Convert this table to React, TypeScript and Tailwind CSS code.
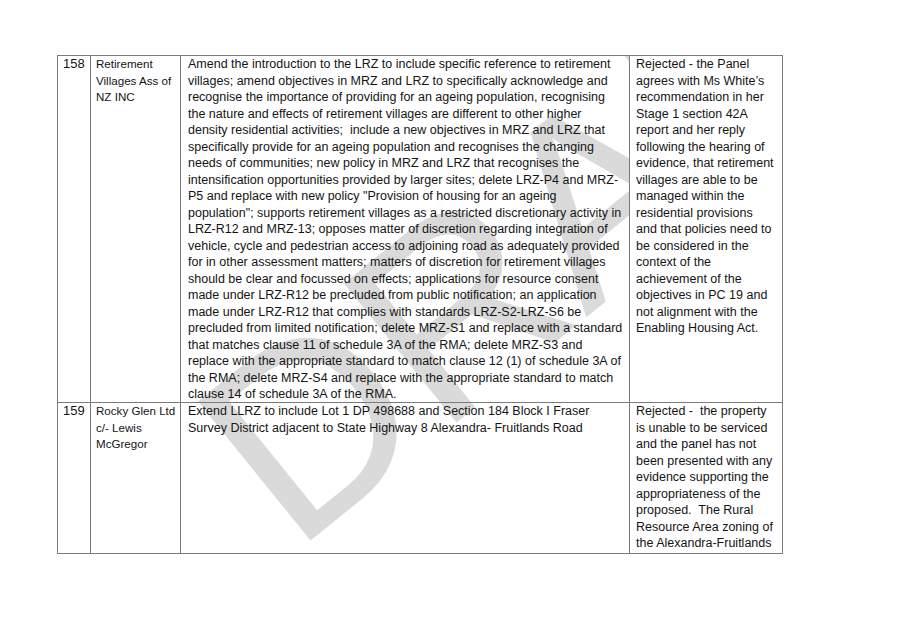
import React from 'react';

const FONT = { fontFamily: '"Liberation Sans", Arial, sans-serif' };

const rows = [
  {
    num: '158',
    submitter: ['Retirement', 'Villages Ass of', 'NZ INC'],
    summary: [
      'Amend the introduction to the LRZ to include specific reference to retirement',
      'villages; amend objectives in MRZ and LRZ to specifically acknowledge and',
      'recognise the importance of providing for an ageing population, recognising',
      'the nature and effects of retirement villages are different to other higher',
      'density residential activities;  include a new objectives in MRZ and LRZ that',
      'specifically provide for an ageing population and recognises the changing',
      'needs of communities; new policy in MRZ and LRZ that recognises the',
      'intensification opportunities provided by larger sites; delete LRZ-P4 and MRZ-',
      'P5 and replace with new policy "Provision of housing for an ageing',
      'population"; supports retirement villages as a restricted discretionary activity in',
      'LRZ-R12 and MRZ-13; opposes matter of discretion regarding integration of',
      'vehicle, cycle and pedestrian access to adjoining road as adequately provided',
      'for in other assessment matters; matters of discretion for retirement villages',
      'should be clear and focussed on effects; applications for resource consent',
      'made under LRZ-R12 be precluded from public notification; an application',
      'made under LRZ-R12 that complies with standards LRZ-S2-LRZ-S6 be',
      'precluded from limited notification; delete MRZ-S1 and replace with a standard',
      'that matches clause 11 of schedule 3A of the RMA; delete MRZ-S3 and',
      'replace with the appropriate standard to match clause 12 (1) of schedule 3A of',
      'the RMA; delete MRZ-S4 and replace with the appropriate standard to match',
      'clause 14 of schedule 3A of the RMA.',
    ],
    decision: [
      'Rejected - the Panel',
      'agrees with Ms White\u2019s',
      'recommendation in her',
      'Stage 1 section 42A',
      'report and her reply',
      'following the hearing of',
      'evidence, that retirement',
      'villages are able to be',
      'managed within the',
      'residential provisions',
      'and that policies need to',
      'be considered in the',
      'context of the',
      'achievement of the',
      'objectives in PC 19 and',
      'not alignment with the',
      'Enabling Housing Act.',
    ],
    height: 'h-[347px]',
  },
  {
    num: '159',
    submitter: ['Rocky Glen Ltd', 'c/- Lewis', 'McGregor'],
    summary: [
      'Extend LLRZ to include Lot 1 DP 498688 and Section 184 Block I Fraser',
      'Survey District adjacent to State Highway 8 Alexandra- Fruitlands Road',
    ],
    decision: [
      'Rejected -  the property',
      'is unable to be serviced',
      'and the panel has not',
      'been presented with any',
      'evidence supporting the',
      'appropriateness of the',
      'proposed.  The Rural',
      'Resource Area zoning of',
      'the Alexandra-Fruitlands',
    ],
    height: 'h-[150px]',
  },
];

const Lines: React.FC<{ lines: string[]; className?: string }> = ({ lines, className }) => (
  <div className={className}>
    {lines.map((l, i) => (
      <div key={i} className="whitespace-pre">
        {l}
      </div>
    ))}
  </div>
);

export default function App() {
  return (
    <div className="w-[907px] h-[626px] bg-white text-[#141414]" style={FONT}>
      <div className="pt-[55px] pl-[57px]">
        <div className="relative w-[726px] border border-[#7a7a7a]">
          {/* watermark, only shows through the summary column */}
          <div className="absolute left-[123px] top-0 w-[448px] h-full overflow-hidden z-0 pointer-events-none">
            <span
              className="absolute left-[113px] top-[278px] text-[260px] leading-none text-[#dadada] whitespace-nowrap origin-[0_220px] -rotate-[39deg]"
              style={FONT}
            >
              DRAFT
            </span>
          </div>

          {rows.map((r, i) => (
            <div
              key={r.num}
              className={`relative z-10 grid grid-cols-[33px_90px_449px_152px] ${r.height} ${
                i === 0 ? 'border-b border-[#7a7a7a]' : ''
              }`}
            >
              <div className="border-r border-[#7a7a7a] pl-[5px] text-[13px] leading-[16.5px]">{r.num}</div>
              <Lines
                lines={r.submitter}
                className="border-r border-[#7a7a7a] pl-[5px] text-[11.6px] leading-[16.5px]"
              />
              <Lines
                lines={r.summary}
                className="border-r border-[#7a7a7a] pl-[7px] text-[12.5px] leading-[16.5px]"
              />
              <Lines lines={r.decision} className="pl-[6px] text-[12.5px] leading-[16.5px]" />
            </div>
          ))}
        </div>
      </div>
    </div>
  );
}
